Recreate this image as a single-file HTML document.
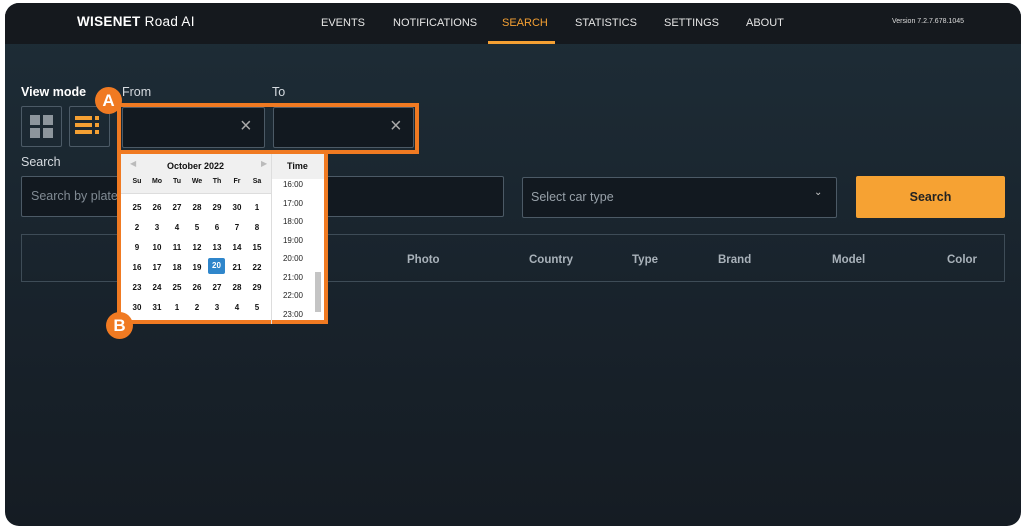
<!DOCTYPE html>
<html><head><meta charset="utf-8"><style>
*{margin:0;padding:0;box-sizing:border-box}
body{width:1028px;height:530px;background:#fff;position:relative;overflow:hidden;font-family:"Liberation Sans",sans-serif}
.win{position:absolute;left:5px;top:3px;width:1016px;height:523px;border-radius:14px;overflow:hidden;background:linear-gradient(#1e2d37,#18222b 60%,#151c23)}
.hdr{position:absolute;left:0;top:0;width:100%;height:41px;background:#15191e}
.a{position:absolute;white-space:nowrap}
.nav{color:#e6e6e6;font-size:11px;top:14px}
.lbl{color:#d6dbe0;font-size:12.5px}
.box{position:absolute;border:1px solid #4c5a66;border-radius:2px;background:#121920}
.hd{color:#a9b2ba;font-size:11.5px;font-weight:bold;top:251px}
.cal{position:absolute;left:117px;top:150px;width:211px;height:174px;border:4px solid #f07a22;background:#fff}
.d{position:absolute;width:20px;text-align:center;font-size:8px;color:#111;font-weight:bold}
.t{position:absolute;left:271px;width:44px;text-align:center;font-size:8px;color:#222}
.circ{position:absolute;width:27px;height:27px;border-radius:50%;background:#f07a22;color:#fff;font-weight:bold;font-size:17px;text-align:center;line-height:27px}
</style></head><body>
<div class="win">
<div class="hdr"></div>
<div class="a" style="left:72px;top:11px;color:#fff;font-size:13.5px;font-weight:bold;letter-spacing:0.3px">WISENET <span style="font-weight:normal">Road AI</span></div>
<div class="a nav" style="left:316px">EVENTS</div>
<div class="a nav" style="left:388px">NOTIFICATIONS</div>
<div class="a nav" style="left:497px;color:#f5a033">SEARCH</div>
<div class="a" style="left:483px;top:38px;width:67px;height:3px;background:#f5a033"></div>
<div class="a nav" style="left:570px">STATISTICS</div>
<div class="a nav" style="left:659px">SETTINGS</div>
<div class="a nav" style="left:741px">ABOUT</div>
<div class="a" style="left:887px;top:15px;color:#ddd;font-size:7px">Version 7.2.7.678.1045</div>

<div class="a lbl" style="left:16px;top:82px;font-weight:bold;color:#fff">View mode</div>
<div class="a lbl" style="left:117px;top:82px">From</div>
<div class="a lbl" style="left:267px;top:82px">To</div>
<div class="box" style="left:16px;top:103px;width:41px;height:41px;background:transparent"></div>
<div class="a" style="left:25px;top:112px;width:10px;height:10px;background:#8d959c"></div>
<div class="a" style="left:38px;top:112px;width:10px;height:10px;background:#8d959c"></div>
<div class="a" style="left:25px;top:125px;width:10px;height:10px;background:#8d959c"></div>
<div class="a" style="left:38px;top:125px;width:10px;height:10px;background:#8d959c"></div>
<div class="box" style="left:64px;top:103px;width:41px;height:41px;background:transparent"></div>
<div class="a" style="left:70px;top:113px;width:17px;height:4px;background:#f5a033;box-shadow:0 7px 0 #f5a033,0 14px 0 #f5a033"></div>
<div class="a" style="left:90px;top:113px;width:4px;height:4px;background:#f5a033;box-shadow:0 7px 0 #f5a033,0 14px 0 #f5a033"></div>
<div class="a" style="left:112px;top:100px;width:302px;height:51px;border:4px solid #f07a22"></div>
<div class="box" style="left:117px;top:104px;width:143px;height:41px"></div>
<div class="a" style="left:235px;top:112px;color:#aaa;font-size:20px">×</div>
<div class="box" style="left:268px;top:104px;width:141px;height:41px"></div>
<div class="a" style="left:385px;top:112px;color:#aaa;font-size:20px">×</div>

<div class="a lbl" style="left:16px;top:152px">Search</div>
<div class="box" style="left:16px;top:173px;width:483px;height:41px"></div>
<div class="a" style="left:26px;top:186px;color:#808a93;font-size:12.5px">Search by plate,</div>
<div class="box" style="left:517px;top:174px;width:315px;height:41px"></div>
<div class="a" style="left:526px;top:187px;color:#98a1a9;font-size:12.5px">Select car type</div>
<div class="a" style="left:809px;top:184px;color:#ccc;font-size:10px">⌄</div>
<div class="a" style="left:851px;top:173px;width:149px;height:42px;background:#f6a233;border-radius:2px;color:#222;font-weight:bold;font-size:12.5px;text-align:center;line-height:42px">Search</div>
<div class="a" style="left:16px;top:231px;width:984px;height:48px;border:1px solid #3e4c57"></div>
<div class="a hd" style="left:402px">Photo</div>
<div class="a hd" style="left:524px">Country</div>
<div class="a hd" style="left:627px">Type</div>
<div class="a hd" style="left:713px">Brand</div>
<div class="a hd" style="left:827px">Model</div>
<div class="a hd" style="left:942px">Color</div>
</div>

<div class="cal">
<div style="position:absolute;left:0;top:0;width:150px;height:40px;background:#f0f0f0;border-bottom:1px solid #ddd"></div>
<div style="position:absolute;left:150px;top:0;width:53px;height:25px;background:#f0f0f0;border-left:1px solid #ddd"></div>
<div style="position:absolute;left:150px;top:25px;width:1px;height:145px;background:#ddd"></div>
<div style="position:absolute;left:46px;top:7px;font-size:9px;font-weight:bold;color:#111">October 2022</div>
<div style="position:absolute;left:9px;top:5px;font-size:8px;color:#bbb">◀</div>
<div style="position:absolute;left:140px;top:5px;font-size:8px;color:#bbb">▶</div>
<div style="position:absolute;left:166px;top:7px;font-size:9px;font-weight:bold;color:#111">Time</div>
<div style="position:absolute;left:194px;top:118px;width:6px;height:40px;background:#c4c4c4"></div>
</div>
<div id="days"></div>
<div class="circ" style="left:95px;top:87px">A</div>
<div class="circ" style="left:106px;top:312px">B</div>
<script>
var h='',w=['Su','Mo','Tu','We','Th','Fr','Sa'];
for(var i=0;i<7;i++)h+='<div class="d" style="left:'+(127+i*20)+'px;top:178px;font-size:7px">'+w[i]+'</div>';
var nums=[25,26,27,28,29,30,1];for(var n=2;n<=31;n++)nums.push(n);nums.push(1,2,3,4,5);
for(var k=0;k<42;k++){var r=Math.floor(k/7),c=k%7,x=127+c*20,y=203+r*20;
if(nums[k]==20&&r==3)h+='<div class="d" style="left:'+(x+1)+'px;top:'+(y-5)+'px;width:17px;height:16px;line-height:16px;background:#2f86cb;color:#fff;border-radius:2px">20</div>';
else h+='<div class="d" style="left:'+x+'px;top:'+y+'px">'+nums[k]+'</div>';}
for(var t=0;t<8;t++)h+='<div class="t" style="top:'+(180+t*18.5)+'px">'+(16+t)+':00</div>';
document.getElementById('days').innerHTML=h;
</script>
</body></html>
